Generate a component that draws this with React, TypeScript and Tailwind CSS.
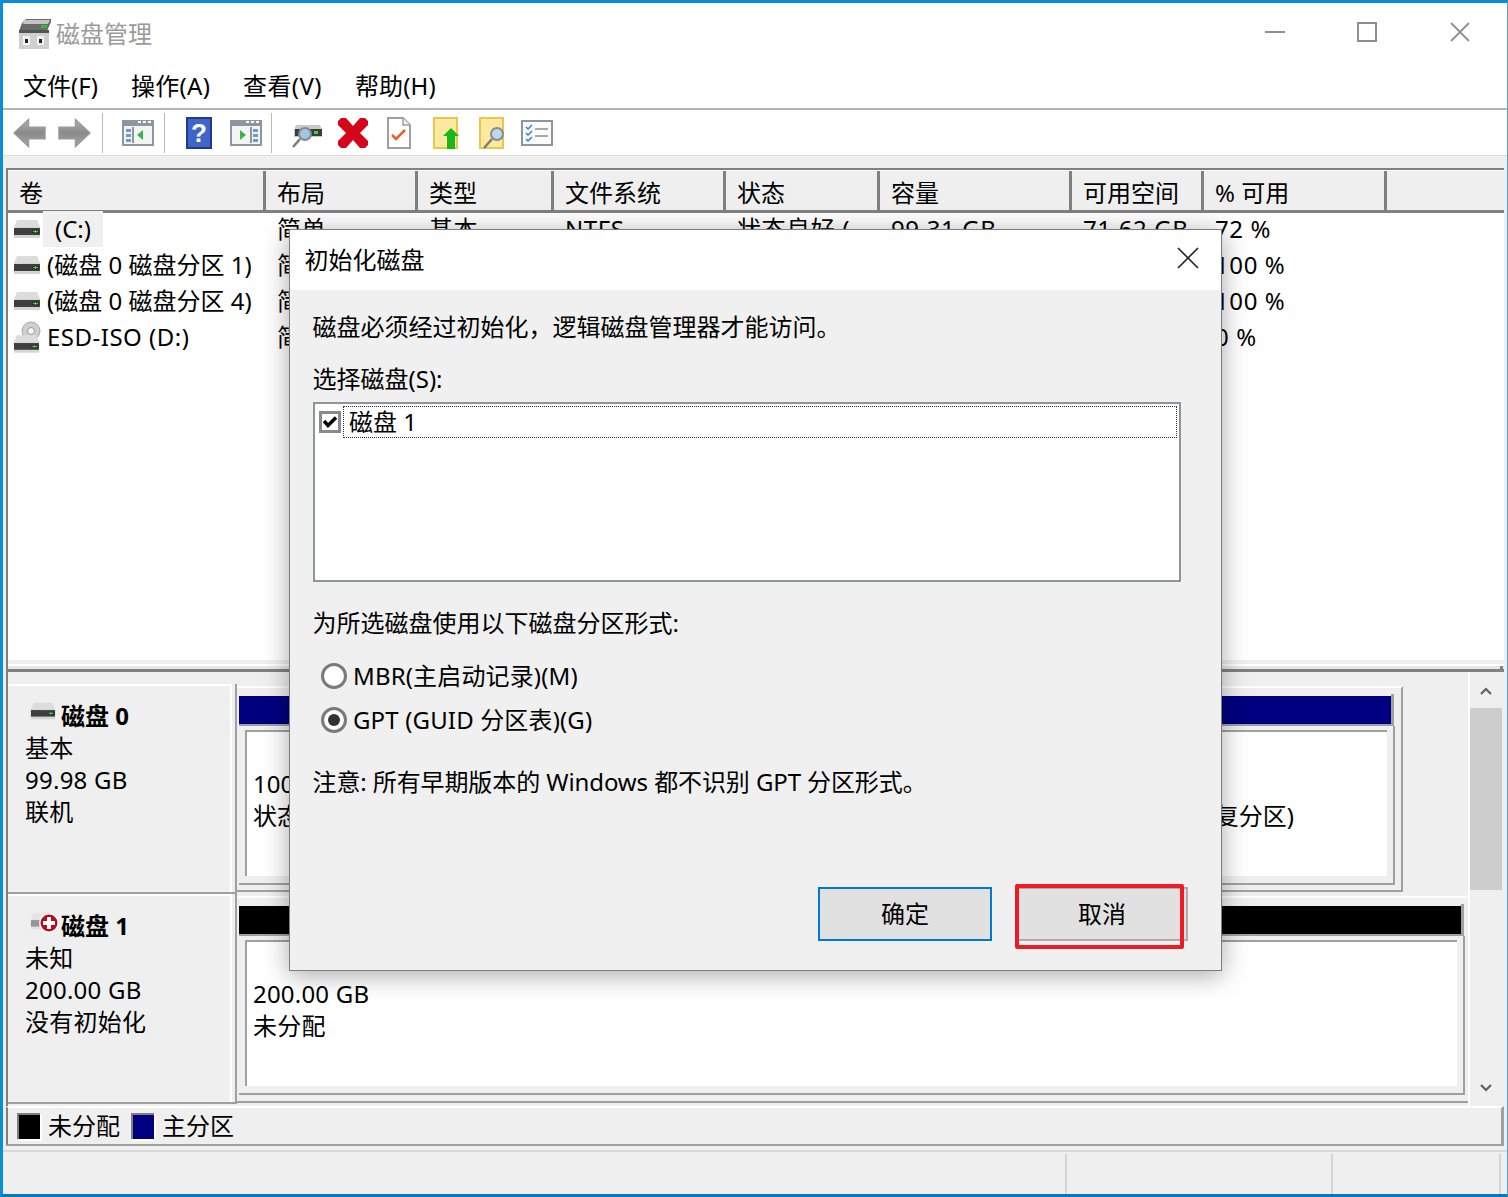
import React from "react";

const Drive = ({ className = "" }: { className?: string }) => (
  <svg viewBox="0 0 28 18" className={className}>
    <path d="M4 0h20l3 7H1z" fill="#dcdcdc" />
    <path d="M1 7h26v11H1z" fill="#d4d4d4" />
    <path d="M1 8h26v7H1z" fill="#3f3f3f" />
    <path d="M19 10h3V9h2v1h2v3h-2v1h-2v-1h-3z" fill="#2f2f2f" />
    <path d="M20 11h5v1h-5zM22 10h1v3h-1z" fill="#35e03a" />
  </svg>
);

const TitleIcon = () => (
  <svg viewBox="0 0 32 30" className="w-8 h-[30px]">
    <path d="M7 0h25v3l-4 9H0l3-8z" fill="#6a6a6a" />
    <path d="M5 1h26l-2 4H4z" fill="#c4c4c4" />
    <path d="M22 6h6v3h-6z" fill="#22c43a" />
    <path d="M0 11h30v19H0z" fill="#cfcfcf" />
    <path d="M0 11h30v3H0z" fill="#555" />
    <path d="M4 17h7v9H4zM18 17h7v9h-7z" fill="#f4f4f4" />
    <path d="M6 20h3v4H6zM20 20h3v4h-3z" fill="#222" />
  </svg>
);

const Arrow = ({ flip }: { flip?: boolean }) => (
  <svg viewBox="0 0 34 32" className={`w-[33px] h-8 ${flip ? "-scale-x-100" : ""}`}>
    <defs>
      <linearGradient id="ag" x1="0" x2="0" y1="0" y2="1">
        <stop offset="0" stopColor="#b0b0b0" />
        <stop offset="0.5" stopColor="#8a8a8a" />
        <stop offset="1" stopColor="#a8a8a8" />
      </linearGradient>
    </defs>
    <path d="M16 2 1 16l15 14v-8h17V10H16z" fill="url(#ag)" stroke="#9a9a9a" strokeWidth="1.5" />
  </svg>
);

const Pane = ({ side }: { side: "l" | "r" }) => (
  <svg viewBox="0 0 32 26" className="w-8 h-[26px]">
    <path d="M0 0h32v26H0z" fill="#8c96a0" />
    <path d="M2 6h28v18H2z" fill="#f4f4f4" />
    <path d="M16 1h3v2h-3zM21 1h3v2h-3zM26 1h3v2h-3z" fill="#fff" />
    {side === "l" ? (
      <>
        <path d="M10 7h2v16h-2z" fill="#8c96a0" />
        <path d="M4 9h5v3H4zM4 14h5v3H4zM4 19h5v3H4z" fill="#6f9ad0" />
        <path d="M21 10v10l-6-5z" fill="#39b54a" />
      </>
    ) : (
      <>
        <path d="M20 7h2v16h-2z" fill="#8c96a0" />
        <path d="M23 9h5v3h-5zM23 14h5v3h-5zM23 19h5v3h-5z" fill="#6f9ad0" />
        <path d="M10 10v10l6-5z" fill="#39b54a" />
      </>
    )}
  </svg>
);

const Sep = ({ ml, mr }: { ml: string; mr: string }) => (
  <div className={`w-0.5 h-10 bg-[#b9b9b9] border-r border-white ${ml} ${mr}`} />
);

const Toolbar = () => (
  <div className="h-12 flex items-center pl-[10px] border-t-2 border-[#b4b4b4] bg-white shrink-0 border-b border-b-[#dcdcdc]">
    <Arrow />
    <div className="w-3" />
    <Arrow flip />
    <Sep ml="ml-[11px]" mr="mr-[18px]" />
    <Pane side="l" />
    <Sep ml="ml-[10px]" mr="mr-5" />
    <svg viewBox="0 0 26 32" className="w-[26px] h-8">
      <path d="M0 0h26v32H0z" fill="#22398c" />
      <path d="M2 2h22v28H2z" fill="#3f66c6" />
      <text x="13" y="25" textAnchor="middle" fontSize="26" fontWeight="700" fill="#fff" fontFamily="Liberation Sans">?</text>
    </svg>
    <div className="w-[18px]" />
    <Pane side="r" />
    <Sep ml="ml-[9px]" mr="mr-[17px]" />
    <svg viewBox="0 0 32 32" className="w-8 h-8">
      <path d="M6 8h24l2 5v7H4v-7z" fill="#c9c9c9" />
      <path d="M5 12h27v7H5z" fill="#3c3c3c" />
      <path d="M24 14h4v3h-4z" fill="#35e03a" />
      <circle cx="15" cy="17" r="6" fill="#9cc7e6" stroke="#8a8a8a" strokeWidth="2" />
      <path d="M10 22 3 30" stroke="#7b7b7b" strokeWidth="2.5" />
    </svg>
    <div className="w-4" />
    <svg viewBox="0 0 30 30" className="w-[30px] h-[30px]">
      <path d="M3 0h5l7 8 7-8h5l3 3v4l-8 8 8 8v4l-3 3h-5l-7-8-7 8H3l-3-3v-4l8-8-8-8V3z" fill="#d4061c" />
    </svg>
    <div className="w-[19px]" />
    <svg viewBox="0 0 24 32" className="w-6 h-8">
      <path d="M1 1h15l7 7v23H1z" fill="#fff" stroke="#a0a0a0" strokeWidth="2" />
      <path d="M16 1v7h7" fill="#eee" stroke="#a0a0a0" strokeWidth="1.5" />
      <path d="m5 18 4 4 9-9" fill="none" stroke="#f05a28" strokeWidth="2.5" />
    </svg>
    <div className="w-[22px]" />
    <svg viewBox="0 0 26 32" className="w-[26px] h-8">
      <path d="M1 1h23v30H1z" fill="#fde9a0" stroke="#e8c84a" strokeWidth="2" />
      <path d="M18 11l8 8h-4v13h-8V19h-4z" fill="#18b818" />
    </svg>
    <div className="w-5" />
    <svg viewBox="0 0 26 32" className="w-[26px] h-8">
      <path d="M1 1h23v30H1z" fill="#fde9a0" stroke="#e8c84a" strokeWidth="2" />
      <circle cx="18" cy="17" r="6" fill="#bcd9ee" stroke="#8a8a8a" strokeWidth="2" />
      <path d="M13 22 5 31" stroke="#7b7b7b" strokeWidth="2.5" />
    </svg>
    <div className="w-4" />
    <svg viewBox="0 0 32 26" className="w-8 h-[26px]">
      <path d="M0 0h32v26H0z" fill="#8c96a0" />
      <path d="M2 2h28v22H2z" fill="#fbfbfb" />
      <path d="m5 7 2 2 4-4M5 13l2 2 4-4M5 19l2 2 4-4" fill="none" stroke="#2d7fd6" strokeWidth="1.5" />
      <path d="M14 8h13v2H14zM14 15h13v2H14z" fill="#a8a8a8" />
    </svg>
  </div>
);

const colW = [258, 152, 136, 172, 154, 192, 132, 180];
const headers = ["卷", "布局", "类型", "文件系统", "状态", "容量", "可用空间", "% 可用"];
const rows = [
  ["(C:)", "简单", "基本", "NTFS", "状态良好 (", "99.31 GB", "71.62 GB", "72 %"],
  ["(磁盘 0 磁盘分区 1)", "简单", "基本", "", "", "", "", "100 %"],
  ["(磁盘 0 磁盘分区 4)", "简单", "基本", "", "", "", "", "100 %"],
  ["ESD-ISO (D:)", "简单", "基本", "", "", "", "", "0 %"],
];

const ListPanel = () => (
  <div className="h-[504px] shrink-0 flex flex-col bg-white border-t-2 border-[#808080] border-l-2 border-b-[3px] overflow-hidden">
    <div className="flex h-[43px] shrink-0 bg-[#efefef] border-t border-white border-b-[3px] border-b-[#808080]">
      {headers.map((h, i) => (
        <div
          key={h}
          className={`h-[39px] flex items-center pl-[11px] pt-[5px] ${i === 7 ? "" : "border-r-[3px] border-[#808080]"}`}
          style={{ width: colW[i] }}
        >
          {h}
        </div>
      ))}
      <div className="flex-1 border-l-[3px] border-[#808080]" />
    </div>
    <div className="flex-1 -mt-0.5">
      {rows.map((r, ri) => (
        <div key={ri} className="flex h-9 items-center">
          {r.map((c, i) => (
            <div
              key={i}
              className={`h-9 leading-9 whitespace-nowrap overflow-hidden ${i === 0 ? "flex items-center pl-[5px]" : "pl-[11px] tracking-[0.6px]"}`}
              style={{ width: colW[i] }}
            >
              {i === 0 ? (
                <>
                  {ri === 3 ? (
                    <span className="relative w-[28px] h-[32px] shrink-0">
                      <svg viewBox="0 0 20 20" className="absolute left-[8px] top-0 w-5 h-5">
                        <circle cx="10" cy="10" r="9" fill="#cfcfcf" stroke="#a8a8a8" />
                        <circle cx="10" cy="10" r="3.5" fill="#f5f5f5" stroke="#999" />
                      </svg>
                      <Drive className="absolute left-0 bottom-0 w-[27px] h-[18px]" />
                    </span>
                  ) : (
                    <Drive className="w-[28px] h-[18px] shrink-0" />
                  )}
                  {ri === 0 ? (
                    <span className="ml-[2px] w-[60px] h-9 bg-[#f0f0f0] pl-3 leading-9">{c}</span>
                  ) : ri === 3 ? (
                    <span className="ml-[6px] tracking-[0.5px]">{c}</span>
                  ) : (
                    <span className="ml-[6px]">{c}</span>
                  )}
                </>
              ) : (
                c
              )}
            </div>
          ))}
        </div>
      ))}
    </div>
    <div className="h-1 bg-[#efefef] shrink-0" />
    <div className="h-0.5 bg-white shrink-0" />
    <div className="h-[3px] bg-[#e8e8e8] shrink-0 flex justify-end pr-px">
      <div className="w-[3px] bg-[#808080]" />
    </div>
  </div>
);

const DiskInfo = ({
  error,
  title,
  lines,
}: {
  error?: boolean;
  title: string;
  lines: string[];
}) => (
  <div className="w-[224px] shrink-0 h-full bg-[#efefef] border-t-2 border-white border-r-2 border-r-white pl-[17px] pt-[14px]">
    <div className="flex items-center h-8 font-bold">
      <span className="relative w-[36px] h-5 -mt-2 shrink-0">
        <Drive className={`absolute left-[5px] top-0 w-[26px] h-[18px] ${error ? "opacity-50" : ""}`} />
        {error && (
          <svg viewBox="0 0 22 22" className="absolute left-[13px] top-0 w-[22px] h-[22px]">
            <circle cx="11" cy="11" r="10" fill="#fff" />
            <circle cx="11" cy="11" r="8.5" fill="#b30f24" />
            <path d="M9 5h4v4h4v4h-4v4H9v-4H5V9h4z" fill="#fff" />
          </svg>
        )}
      </span>
      <span>{title}</span>
    </div>
    {lines.map((l) => (
      <div key={l} className="h-8 tracking-[0.25px]">
        {l}
      </div>
    ))}
  </div>
);

const Divider = () => <div className="h-[2px] bg-[#a0a0a0] w-[229px] shrink-0" />;

const Lower = () => (
  <div className="h-[434px] shrink-0 flex bg-[#efefef] border-l-2 border-[#808080]">
    <div className="flex-1 flex flex-col pt-3">
      <div className="h-[208px] shrink-0 flex">
        <DiskInfo title="磁盘 0" lines={["基本", "99.98 GB", "联机"]} />
        <div className="w-[3px] shrink-0" />
        <div className="w-0.5 h-full bg-[#a0a0a0] shrink-0" />
        <div className="mt-0.5 w-[1166px] h-[206px] border-t-2 border-white border-r-2 border-b-2 border-r-[#a0a0a0] border-b-[#a0a0a0] pt-1.5">
          <div className="ml-0.5 w-[1155px] h-8 pt-0.5 border-r-[3px] border-b-2 border-[#a0a0a0]">
            <div className="h-[28px] bg-[#000080]" />
          </div>
          <div className="ml-0.5 w-[1156px] h-[159px] pl-1.5 pt-1 border-r-2 border-b-2 border-[#a0a0a0]">
            <div className="w-[1142px] h-[146px] border-l-2 border-t-2 border-[#a0a0a0] bg-white flex justify-between pl-1.5 pr-[93px] pt-9">
              <div>
                <div>100 MB</div>
                <div>状态良好 (EFI 系统分区)</div>
              </div>
              <div className="pt-8">状态良好 (恢复分区)</div>
            </div>
          </div>
        </div>
      </div>
      <Divider />
      <div className="h-[208px] shrink-0 flex">
        <DiskInfo error title="磁盘 1" lines={["未知", "200.00 GB", "没有初始化"]} />
        <div className="w-[3px] shrink-0" />
        <div className="w-0.5 h-full bg-[#a0a0a0] shrink-0" />
        <div className="mt-0.5 flex-1 h-[207px] border-t-2 border-white border-b-2 border-b-[#a0a0a0] pt-1.5">
          <div className="ml-0.5 w-[1225px] h-8 pt-0.5 border-r-[3px] border-b-2 border-[#a0a0a0]">
            <div className="h-[28px] bg-black" />
          </div>
          <div className="ml-0.5 w-[1226px] h-[159px] pl-1.5 pt-1 border-r-2 border-b-2 border-[#a0a0a0]">
            <div className="w-[1212px] h-[146px] border-l-2 border-t-2 border-[#a0a0a0] bg-white pl-1.5 pt-9 tracking-[0.2px]">
              <div>200.00 GB</div>
              <div>未分配</div>
            </div>
          </div>
        </div>
      </div>
      <Divider />
    </div>
    <div className="w-9 shrink-0 border-l-2 border-white flex flex-col bg-[#efefef]">
      <div className="h-9 w-8 flex items-center justify-center">
        <svg viewBox="0 0 12 8" className="w-3 h-2 mt-px">
          <path d="M1 7l5-5 5 5" fill="none" stroke="#606060" strokeWidth="2.2" />
        </svg>
      </div>
      <div className="h-[182px] w-8 bg-[#cdcdcd]" />
      <div className="flex-1" />
      <div className="h-6 w-8 flex items-start justify-center pt-0.5">
        <svg viewBox="0 0 12 8" className="w-3 h-2">
          <path d="M1 1l5 5 5-5" fill="none" stroke="#606060" strokeWidth="2.2" />
        </svg>
      </div>
    </div>
  </div>
);

const Swatch = ({ color }: { color: string }) => (
  <div className={`w-[23px] h-[26px] border-l-2 border-t-2 border-[#808080] ${color} shadow-[2px_2px_0_#fff]`} />
);

const Legend = () => (
  <div className="h-[40px] shrink-0 flex items-center bg-[#efefef] border-t-2 border-white border-b-2 border-b-[#a0a0a0] border-l-2 border-l-[#808080] border-r-[3px] border-r-[#a0a0a0] pl-[9px]">
    <Swatch color="bg-black" />
    <span className="ml-2 w-[72px] whitespace-nowrap">未分配</span>
    <span className="w-[11px]" />
    <Swatch color="bg-[#000080]" />
    <span className="ml-2 whitespace-nowrap">主分区</span>
  </div>
);

const Status = () => (
  <div className="flex-1 bg-[#efefef] mt-1 border-t-2 border-[#d8d8d8] flex justify-end pt-[2px]">
    <div className="w-[266px] border-l-2 border-[#d4d4d4]" />
    <div className="w-[170px] border-l-2 border-r-2 border-[#d4d4d4]" />
    <div className="w-[6px]" />
  </div>
);

const Dialog = () => (
  <div className="absolute left-[286px] top-[226px] w-[933px] h-[742px] bg-[#f0f0f0] border border-[#7d7d7d] shadow-[0_4px_24px_rgba(0,0,0,0.35)] flex flex-col">
    <div className="h-[60px] bg-white flex items-center justify-between pl-[14.5px] pr-[22px] shrink-0">
      <span>初始化磁盘</span>
      <svg viewBox="0 0 22 22" className="w-[22px] h-[22px] -mt-1">
        <path d="M1 1l20 20M21 1 1 21" stroke="#222" strokeWidth="1.6" />
      </svg>
    </div>
    <div className="flex-1 flex flex-col pl-[23px] pr-[40px] relative">
      <div className="h-8 mt-[21px] -ml-[0.5px]">磁盘必须经过初始化，逻辑磁盘管理器才能访问。</div>
      <div className="h-8 mt-5 -ml-[0.5px]">选择磁盘(S):</div>
      <div className="h-[180px] mt-[7px] border-2 border-[#8f949c] bg-white p-[2px]">
        <div className="flex items-center h-8 pl-[2px]">
          <span className="w-[22px] h-[22px] border-[3px] border-[#8a8a8a] bg-white flex items-center justify-center shrink-0">
            <svg viewBox="0 0 14 12" className="w-[14px] h-3">
              <path d="M1 5 5 9.5 13 1.5" fill="none" stroke="#000" strokeWidth="3.4" />
            </svg>
          </span>
          <span className="ml-[2px] flex-1 h-8 leading-[30px] border border-dotted border-[#333] pl-[5px]">磁盘 1</span>
        </div>
      </div>
      <div className="h-8 mt-[25px] -ml-[0.5px]">为所选磁盘使用以下磁盘分区形式:</div>
      <div className="flex items-center h-8 mt-[21px] pl-2">
        <span className="w-[26px] h-[26px] rounded-full border-[3px] border-[#7a7a7a] bg-white shrink-0" />
        <span className="ml-[6px] tracking-[0.15px]">MBR(主启动记录)(M)</span>
      </div>
      <div className="flex items-center h-8 mt-3 pl-2">
        <span className="w-[26px] h-[26px] rounded-full border-[3px] border-[#7a7a7a] bg-white shrink-0 flex items-center justify-center">
          <span className="w-3 h-3 rounded-full bg-[#333]" />
        </span>
        <span className="ml-[6px] tracking-[0.15px]">GPT (GUID 分区表)(G)</span>
      </div>
      <div className="h-8 mt-[30px] -ml-[0.5px] tracking-[-0.1px]">注意: 所有早期版本的 Windows 都不识别 GPT 分区形式。</div>
      <div className="flex mt-[89px] pl-[505px]">
        <div className="w-[174px] h-[54px] shrink-0 border-2 border-[#0078d7] bg-[#e1e1e1] flex items-center justify-center">确定</div>
        <div className="relative ml-6 w-[172px] h-[54px] shrink-0 border-2 border-[#adadad] bg-[#e1e1e1] flex items-center justify-center">
          取消
          <div className="absolute -left-[3px] -top-[5px] w-[169px] h-[65px] border-4 border-[#ed1c24] rounded-[2px]" />
        </div>
      </div>
    </div>
  </div>
);

export default function App() {
  return (
    <div className="relative w-[1508px] h-[1197px] overflow-hidden flex flex-col bg-white text-black text-[24px] leading-8 font-['Noto_Sans','Noto_Sans_CJK_SC',sans-serif] border-t-[3px] border-t-[#0a8bd6] border-l-[3px] border-l-[#0a8fd6] border-b-[3px] border-b-[#0a77b8] border-r border-r-[#5a9fc9]">
      <div className="h-[61px] shrink-0 flex items-center pl-4 text-[#9b9b9b]">
        <TitleIcon />
        <span className="ml-[5px]">磁盘管理</span>
        <div className="ml-auto flex items-center mr-[37px] -mt-1">
          <div className="w-5 h-[2px] bg-[#8f8f8f]" />
          <div className="w-5 h-5 border-2 border-[#8f8f8f] ml-[72px]" />
          <svg viewBox="0 0 20 20" className="w-5 h-5 ml-[73px]">
            <path d="M1 1l18 18M19 1 1 19" stroke="#8f8f8f" strokeWidth="1.8" />
          </svg>
        </div>
      </div>
      <div className="h-[44px] shrink-0 flex items-center pl-5">
        <span className="w-[108px]">文件(F)</span>
        <span className="w-[112px] tracking-[0.3px]">操作(A)</span>
        <span className="w-[112px] tracking-[0.4px]">查看(V)</span>
        <span className="tracking-[0.1px]">帮助(H)</span>
      </div>
      <Toolbar />
      <div className="flex-1 flex flex-col bg-[#efefef] pt-3">
        <div className="flex flex-col mx-[3px]">
          <ListPanel />
          <Lower />
          <Legend />
        </div>
        <Status />
      </div>
      <Dialog />
    </div>
  );
}
